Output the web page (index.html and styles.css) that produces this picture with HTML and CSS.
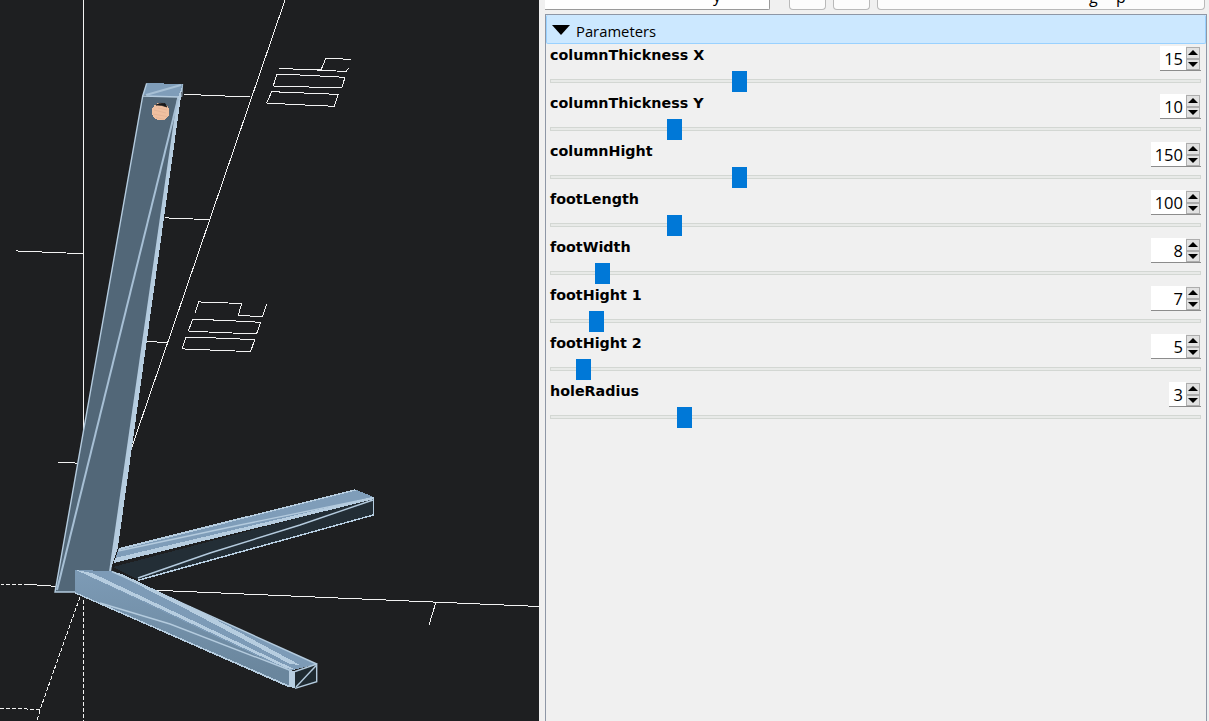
FILE: index.html
```html
<!DOCTYPE html>
<html lang="en">
<head>
<meta charset="utf-8">
<title>OpenSCAD Customizer</title>
<link rel="stylesheet" href="styles.css">
</head>
<body>
<div class="app">
  <main class="viewport">
    <svg class="scene" width="539" height="721" viewBox="0 0 539 721">
      <defs>
        <linearGradient id="sideGrad" x1="0" y1="0" x2="0.15" y2="1">
          <stop offset="0" stop-color="#7d9bb6"/>
          <stop offset="1" stop-color="#6a869d"/>
        </linearGradient>
      </defs>
      <!-- axes and ruler -->
      <g class="axis">
        <path d="M83.5 0V440"/>
        <path d="M285 0L124 470"/>
        <path d="M184 94.5L201 95L225 96L250 97"/>
        <path d="M165 217L169 218L193 219L210 219.5"/>
        <path d="M147 341L167 343"/>
        <path d="M58 462L83 463.5"/>
        <path d="M16 250L18 251L42 252L66 253L83 253.5"/>
        <path d="M25 584.5L49 585.5L55 587"/>
        <path d="M55 586L539 606.5"/>
        <path d="M436 602L429 625"/>
      </g>
      <g class="axis dashed">
        <path d="M83.5 600V721"/>
        <path d="M80 597L40 710L37 721"/>
        <path d="M0 708L40 709.5"/>
        <path d="M0 584L25 584.5"/>
      </g>
      <!-- ruler digits -->
      <g class="digit">
        <path d="M279 68.3L293 69L321 70L326 58L351 59.5"/>
        <path d="M317 70L346 71.5L349 68"/>
        <path d="M276.7 74.3L293.3 74.7L320 76L345 77.3L341.7 88L320 87.3L296.7 86.7L273.3 86Z"/>
        <path d="M271.7 91.7L296.7 92.7L320 93.7L338.3 94.3L334.3 106.3L298.3 104.7L266.7 103Z"/>
        <path d="M195.3 312.7L198.7 301.7L203.3 302.3L228.3 303L241.7 303.7L238.3 315L253.3 316.3L262.7 316.3L266.7 304.3"/>
        <path d="M192.7 319.3L206 319.7L230 320.7L260.7 322.3L256.7 333.3L231.7 333L208.3 332L188.3 331Z"/>
        <path d="M186 337.3L208.3 337.7L233.3 338.7L254.7 339.7L250.7 351.3L235 351L210 350L186 349.3L182.3 348.3Z"/>
      </g>
      <!-- back foot -->
      <g class="solid">
        <polygon class="f-dark" points="113,567 374,498 374.3,515 138,579.5"/>
        <polygon class="f-top" points="118.7,548 355,489.3 374.3,497.3 115,560"/>
        <polygon class="f-edge" points="115,558 374.3,496.5 374.3,499 114,563"/>
        <polygon class="f-edge" points="118.7,548 355,489.3 356,490.5 119,550"/>
        <polygon class="f-edge" points="138,579.5 374.3,514 374.3,515.5 138.5,581"/>
        <polygon class="f-edge" points="374.3,497 374.3,515 373.2,515 373.2,497"/>
        <polyline class="f-line" points="118,551 240,525 372,498"/>
        <polyline class="f-line" points="138,578 210,553 300,525 373,500"/>
      </g>
      <!-- column -->
      <g class="solid">
        <polygon class="c-side" points="182.7,84 178,97 110,572 118,547"/>
        <polygon class="c-front" points="142.7,96 178.3,97 110,572 98,592 55,592"/>
        <polygon class="f-top" points="146.7,83.3 158.7,83.3 182.7,84.3 178.3,97 142.7,95.3"/>
        <polyline class="c-edge" points="142.7,96 178.3,97"/>
        <polyline class="c-edge" points="146.7,83.3 142.7,96 55,592 98,592"/>
        <polyline class="c-edge wide" points="178.3,97 110,572"/>
        <polyline class="c-line" points="146,95 181,85"/>
        <polyline class="c-line" points="178,99 57,590"/>
        <polyline class="c-line thin" points="182.7,84 181.7,97"/>
      </g>
      <!-- hole -->
      <circle class="hole" cx="160.7" cy="111.7" r="8.8"/>
      <path class="hole-dark" d="M156 105Q160 102.5 165 103.5L167 107Q161 104.5 156 105Z"/>
      <path class="hole-lines" d="M154 110L166 113M153 114L167 116.5M156 117.5L165 119.5M158 108L167 110"/>
      <!-- front foot -->
      <g class="solid">
        <polygon class="f-end" points="295,671.5 316.7,664 316.7,681.7 295,688.3"/>
        <polygon class="f-side" points="75,570 289.3,671 289.3,686.7 75,592.7"/>
        <polygon class="f-top2" points="75,570 111.7,571 316.7,664 289.3,671"/>
        <polygon class="f-edge" points="76,570 92,573 200,624 296,670 286,668 150,604"/>
        <polygon class="f-edge" points="111,571 122,574 200,611 300,665 290,664 180,606"/>
        <polygon class="f-edge" points="289.3,671 295,671.5 295,688.3 289.3,686.7"/>
        <polygon class="f-edge" points="75,592 289.3,685.5 289.3,687.5 75,593.5"/>
        <polyline class="f-line" points="100,603 170,624 292,671"/>
        <polyline class="f-line" points="112,571.5 316.7,664"/>
        <polyline class="f-line" points="295,671.5 316.7,664 316.7,681.7 295,688.3"/>
        <polyline class="f-line" points="296,687 316.7,665"/>
      </g>
    </svg>
  </main>
  <aside class="side">
    <div class="toolbar">
      <div class="field field-a"><span class="tail tail-a">y</span></div>
      <div class="field field-b"></div>
      <div class="field field-b"></div>
      <div class="field field-c"><span class="tail tail-c">g</span><span class="tail tail-d">p</span></div>
    </div>
    <section class="panel">
      <header class="panel-head"><span class="arrow"></span><span class="panel-title">Parameters</span></header>
      <div class="param">
        <div class="param-top"><span class="param-name">columnThickness X</span><div class="spin spin-2"><span class="spin-val">15</span><div class="spin-btns"><span class="btn"><i class="up"></i></span><span class="btn"><i class="down"></i></span></div></div></div>
        <div class="slider"><div class="track"></div><div class="thumb" style="left:182px"></div></div>
      </div>
      <div class="param">
        <div class="param-top"><span class="param-name">columnThickness Y</span><div class="spin spin-2"><span class="spin-val">10</span><div class="spin-btns"><span class="btn"><i class="up"></i></span><span class="btn"><i class="down"></i></span></div></div></div>
        <div class="slider"><div class="track"></div><div class="thumb" style="left:117px"></div></div>
      </div>
      <div class="param">
        <div class="param-top"><span class="param-name">columnHight</span><div class="spin spin-3"><span class="spin-val">150</span><div class="spin-btns"><span class="btn"><i class="up"></i></span><span class="btn"><i class="down"></i></span></div></div></div>
        <div class="slider"><div class="track"></div><div class="thumb" style="left:182px"></div></div>
      </div>
      <div class="param">
        <div class="param-top"><span class="param-name">footLength</span><div class="spin spin-3"><span class="spin-val">100</span><div class="spin-btns"><span class="btn"><i class="up"></i></span><span class="btn"><i class="down"></i></span></div></div></div>
        <div class="slider"><div class="track"></div><div class="thumb" style="left:117px"></div></div>
      </div>
      <div class="param">
        <div class="param-top"><span class="param-name">footWidth</span><div class="spin spin-3"><span class="spin-val">8</span><div class="spin-btns"><span class="btn"><i class="up"></i></span><span class="btn"><i class="down"></i></span></div></div></div>
        <div class="slider"><div class="track"></div><div class="thumb" style="left:45px"></div></div>
      </div>
      <div class="param">
        <div class="param-top"><span class="param-name">footHight 1</span><div class="spin spin-3"><span class="spin-val">7</span><div class="spin-btns"><span class="btn"><i class="up"></i></span><span class="btn"><i class="down"></i></span></div></div></div>
        <div class="slider"><div class="track"></div><div class="thumb" style="left:39px"></div></div>
      </div>
      <div class="param">
        <div class="param-top"><span class="param-name">footHight 2</span><div class="spin spin-3"><span class="spin-val">5</span><div class="spin-btns"><span class="btn"><i class="up"></i></span><span class="btn"><i class="down"></i></span></div></div></div>
        <div class="slider"><div class="track"></div><div class="thumb" style="left:26px"></div></div>
      </div>
      <div class="param">
        <div class="param-top"><span class="param-name">holeRadius</span><div class="spin spin-1"><span class="spin-val">3</span><div class="spin-btns"><span class="btn"><i class="up"></i></span><span class="btn"><i class="down"></i></span></div></div></div>
        <div class="slider"><div class="track"></div><div class="thumb" style="left:127px"></div></div>
      </div>
    </section>
  </aside>
</div>
</body>
</html>
```
FILE: styles.css
```css
* { box-sizing: border-box; }
html, body { margin: 0; padding: 0; height: 721px; overflow: hidden; background: #f0f0f0; }
.app { display: flex; width: 1209px; height: 721px; }

/* 3D viewport */
.viewport { width: 539px; height: 721px; background: #1e1f21; flex: none; }
.scene { display: block; }
.axis path, .digit path { fill: none; stroke: #f2f2f2; stroke-width: 1; shape-rendering: crispEdges; }
.axis.dashed path { stroke-dasharray: 4 2; }
.solid polygon { shape-rendering: crispEdges; }
.c-front { fill: #526778; }
.c-side { fill: #b6cde0; }
.f-top { fill: #7f9db9; }
.f-top2 { fill: #7d9bb7; }
.f-side { fill: url(#sideGrad); }
.f-dark { fill: #232e36; }
.f-end { fill: #1f2a31; }
.f-edge { fill: #b6cde0; }
.f-line, .c-line, .c-edge { fill: none; stroke: #b4cbde; stroke-width: 1.4; }
.c-edge.wide { stroke-width: 2; }
.c-line { stroke: #a7c0d5; stroke-width: 2; }
.c-line.thin { stroke-width: 1; }
.hole { fill: #f0c0a0; shape-rendering: crispEdges; }
.hole-dark { fill: #17181a; stroke: #17181a; stroke-width: 0.8; }
.hole-lines { fill: none; stroke: #dfb094; stroke-width: 0.7; }

/* Right side */
.side { flex: 1; display: flex; flex-direction: column; padding-left: 6px; min-width: 0; }
.toolbar { display: flex; height: 14px; align-items: flex-start; }
.field { position: relative; height: 10px; background: #fff; border: 1px solid #b9b9b9; border-top: 0; border-radius: 0 0 4px 4px; overflow: hidden; }
.field-a { width: 225px; margin-right: 19px; border-left: 0; border-color: #9a9a9a; border-radius: 0 0 2px 0; }
.field-b { width: 37px; margin-right: 7px; background: #fcfcfc; }
.field-c { width: 328px; background: #fcfcfc; }
.tail { position: absolute; font: 16px/16px "Open Sans", sans-serif; color: #000; }
.tail-a { left: 168px; bottom: 5px; }
.tail-c { left: 211px; bottom: 4px; }
.tail-d { left: 238px; bottom: 4px; }

.panel { width: 662px; flex: 1; border: 1px solid #8e97a6; border-bottom: 0; background: #f0f0f0; }
.panel-head { display: flex; align-items: center; height: 29px; background: #cce8ff; border: 1px solid #99d1ff; border-top: 0; border-radius: 2px; padding-left: 5px; }
.arrow { width: 0; height: 0; border-style: solid; border-width: 10px 9.5px 0 9.5px; border-color: #000 transparent transparent transparent; margin-right: 5px; margin-top: 1px; }
.panel-title { font: 14.8px/28px "Open Sans", sans-serif; color: #000; position: relative; top: 2px; left: 1px; }

.param { height: 48px; padding: 2px 5px 0 4px; }
.param-top { display: flex; justify-content: space-between; align-items: flex-start; height: 25px; }
.param-name { font: bold 14.3px/18px "DejaVu Sans", Verdana, sans-serif; color: #000; }
.spin { display: flex; height: 25px; background: #fff; border-bottom: 1px solid #8c8c8c; }
.spin-1 { width: 32px; }
.spin-2 { width: 41px; }
.spin-3 { width: 50px; }
.spin-val { flex: 1; text-align: right; font: 16.5px/26px "Open Sans", sans-serif; color: #000; padding-right: 3px; }
.spin-btns { width: 15px; flex: none; background: #f0f0f0; padding-top: 1px; display: flex; flex-direction: column; }
.btn { display: flex; align-items: center; justify-content: center; width: 14px; height: 11.5px; background: #e1e1e1; border: 1px solid #adadad; }
.up, .down { display: block; width: 0; height: 0; border-style: solid; }
.up { border-width: 0 5px 5px 5px; border-color: transparent transparent #000 transparent; }
.down { border-width: 5px 5px 0 5px; border-color: #000 transparent transparent transparent; }

.slider { position: relative; height: 23px; }
.track { position: absolute; left: 0; right: 0; top: 8px; height: 4px; background: #e8eae8; border: 1px solid #d3d7d3; }
.thumb { position: absolute; top: 0; width: 15px; height: 21px; background: #0078d7; }
```
